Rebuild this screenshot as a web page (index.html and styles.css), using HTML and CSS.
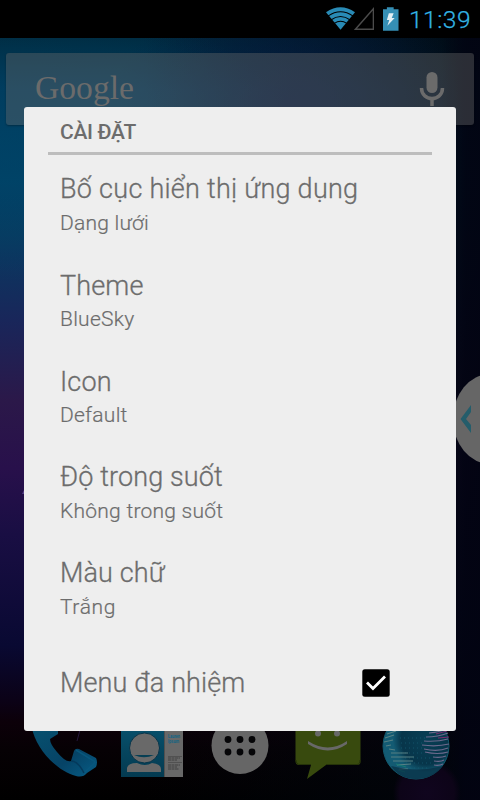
FILE: index.html
```html
<!DOCTYPE html>
<html lang="vi">
<head>
<meta charset="utf-8">
<title>Cài đặt</title>
<link rel="stylesheet" href="styles.css">
</head>
<body>
<div class="screen">
  <header class="status">
    <svg class="wifi" width="30" height="24" viewBox="0 0 30 24"><path d="M0 5Q15-5 30 5L15 23Z" fill="#298bb6"/><path d="M2 9Q15 0 28 9M5 13Q15 6 25 13M8.500 16.500Q15 12 21.500 16.500" fill="none" stroke="#000" stroke-width="1.100"/></svg>
    <svg class="signal" width="21" height="24" viewBox="0 0 21 24"><path d="M1.500 22.500H20V1.500Z" fill="none" stroke="#4b4b4b" stroke-width="1.500"/></svg>
    <svg class="battery" width="16" height="24" viewBox="0 0 16 24"><path d="M0 2H4V0H11V2H16V24H0Z" fill="#358fb5"/><path d="M6 6H11L9 11H12L4.500 19L6.500 13H4Z" fill="#e3f0f5"/></svg>
    <span class="clock">11:39</span>
  </header>
  <div class="search">
    <svg width="468" height="72" viewBox="6 53 468 72">
      <text class="logo" x="35" y="99" textLength="99" lengthAdjust="spacingAndGlyphs">Google</text>
      <rect x="426.500" y="72" width="11" height="21" rx="5.500" fill="#6b6b6b"/>
      <path d="M421.500 88C421.500 102 442.500 102 442.500 88M432 98V106" fill="none" stroke="#6b6b6b" stroke-width="3.500"/>
    </svg>
  </div>
  <svg class="handle" width="24" height="90" viewBox="456 374 24 90"><ellipse cx="490" cy="419" rx="37" ry="45" fill="#666"/><path d="M471 405L460.500 419L471 433V425L466 419L471 412Z" fill="#245d6b"/></svg>
  <svg class="spark" width="3" height="6" viewBox="0 0 3 6"><path d="M3 0L0 6H3Z" fill="#554087"/></svg>
  <svg class="dock" width="480" height="75" viewBox="0 725 480 75">
    <defs>
      <linearGradient id="phone" x1="0" y1="0" x2="1" y2="1"><stop stop-color="#07516f"/><stop offset=".6" stop-color="#064366"/><stop offset="1" stop-color="#075d86"/></linearGradient>
      <radialGradient id="globe" cx=".65" cy=".4"><stop stop-color="#083f55"/><stop offset=".75" stop-color="#07354a"/><stop offset="1" stop-color="#135b73"/></radialGradient>
      <linearGradient id="card" x2="0" y2="1"><stop stop-color="#07516d"/><stop offset="1" stop-color="#043a50"/></linearGradient>
      <radialGradient id="glow"><stop stop-color="#10051e"/><stop offset=".8" stop-color="#0d0418"/><stop offset="1" stop-color="#0d0418" stop-opacity="0"/></radialGradient>
    </defs>
    <circle cx="427" cy="793" r="34" fill="url(#glow)"/>
    <path d="M80 730L77 741" stroke="#25153a"/>
    <path d="M32 728C35 746 54 770 76 776Q83 778 87 773L96 767Q98 762 96 758L79 749Q75 748 74 751L71 761Q66 763 57 752Q50 744 50 739L58 734V728Z" fill="url(#phone)"/>
    <path d="M76 750L94 761Q96 763 91 766L84 773" fill="none" stroke="#08577d" stroke-width="1.500"/>
    <path d="M71 761Q78 761 84 773" fill="none" stroke="#053a5c" stroke-width="1.500"/>
    <rect x="121" y="725" width="62" height="52" fill="#686868"/>
    <rect x="121" y="725" width="44" height="52" fill="url(#card)"/>
    <circle cx="144.500" cy="748" r="15" fill="#696969" stroke="#05344a"/>
    <path d="M134 755H154Q144 759.500 134 755Z" fill="#063f54"/>
    <path d="M127 772V768Q128 763 137 763Q145 767 152 763Q161 764 161 769V772Z" fill="#686868"/>
    <path d="M164.500 725V777" stroke="#505050"/>
    <text class="card-text" x="168" y="738" textLength="12" lengthAdjust="spacingAndGlyphs">Lauren</text><text class="card-text" x="168" y="742.500" textLength="11" lengthAdjust="spacingAndGlyphs">Ipsum</text>
    <path d="M168 758H180M168 760H177M168 765H180M168 767H177M168 769H179" stroke="#414141" stroke-dasharray="3 .5"/>
    <path d="M168 756.500H182M168 762.500H182" stroke="#4b4b4b" stroke-width=".8"/>
    <circle cx="240" cy="745.500" r="28.500" fill="#666"/>
    <g fill="#050507"><circle cx="228" cy="739.500" r="3.400"/><circle cx="240" cy="739.500" r="3.400"/><circle cx="252" cy="739.500" r="3.400"/><circle cx="228" cy="752" r="3.400"/><circle cx="240" cy="752" r="3.400"/><circle cx="252" cy="752" r="3.400"/></g>
    <path d="M295.500 725H360.500V762Q360.500 765 357 765H326L307 779L311 765H299Q295.500 765 295.500 761Z" fill="#384a0e"/>
    <path d="M296 760Q296 764.500 300 764.500H311M326 764.500H357Q360 764.500 360 760" fill="none" stroke="#253309"/>
    <g fill="#686868"><circle cx="318" cy="733.500" r="3"/><circle cx="337" cy="733.500" r="3"/><path d="M308 741Q328 754 347 741V744Q328 757 308 744Z"/></g>
    <circle cx="416" cy="746" r="33" fill="url(#globe)" stroke="#12586c"/>
    <path d="M400 738H425M401 743H425M401 748H424M401 753H425M405 758H432M406 763H431M406 768H430" stroke="#176077" stroke-width=".7" stroke-dasharray="1 3"/>
    <path d="M387 734L396 731M385 738L394 735M384 742L393 740M386 746L391 745M389 749L395 750M391 753L408 753M391 757L414 757M393 761L413 761M397 765L411 764M399 769L408 769" stroke="#568084" stroke-width="1.200"/>
    <path d="M429 733Q440 732 446 729M426 737Q438 737 448 733M424 741Q437 742 448 739M422 745Q437 747 449 744M424 749Q438 752 448 748M425 752Q438 755 448 752M433 757Q441 758 446 756M434 761Q441 762 444 760M434 765Q439 766 443 764" fill="none" stroke="#6c698c" stroke-width="1.200"/>
    <path d="M436 734L447 731M438 738L449 737" stroke="#7b2c70"/>
    <path d="M396 764L406 767M398 770L405 772" stroke="#177c74"/>
    <path d="M391 766Q417 773 443 766Q433 779 416 779Q400 779 391 766Z" fill="#082e43" opacity=".7"/>
  </svg>
  <main class="dialog">
    <h1 class="heading">CÀI ĐẶT</h1>
    <section class="item"><div class="title wide">Bố cục hiển thị ứng dụng</div><div class="value">Dạng lưới</div></section>
    <section class="item low"><div class="title">Theme</div><div class="value">BlueSky</div></section>
    <section class="item low"><div class="title">Icon</div><div class="value">Default</div></section>
    <section class="item"><div class="title">Độ trong suốt</div><div class="value">Không trong suốt</div></section>
    <section class="item"><div class="title">Màu chữ</div><div class="value loose">Trắng</div></section>
    <section class="item toggle"><div class="title">Menu đa nhiệm</div>
      <svg width="28" height="28" viewBox="0 0 28 28"><rect x=".3" y=".3" width="27.400" height="27.400" rx="2.500"/><path d="M5 13.500L11 19.500L23 7.500" fill="none" stroke="#fff" stroke-width="2.800"/></svg>
    </section>
  </main>
</div>
</body>
</html>
```
FILE: styles.css
```css
body { margin: 0; }
.screen {
  position: relative;
  width: 480px;
  height: 800px;
  overflow: hidden;
  font-family: Roboto, "Noto Sans", sans-serif;
  background:
    linear-gradient(90deg, transparent 92%, rgba(2, 3, 18, .75) 97%),
    radial-gradient(ellipse 300px 140px at 0 140px, rgba(0, 68, 104, .5), transparent),
    radial-gradient(ellipse 180px 130px at 290px 110px, rgba(7, 23, 65, .75), transparent),
    linear-gradient(90deg, transparent 30%, rgba(1, 5, 13, .88) 100%),
    linear-gradient(#002b40 38px, #003a5b 90px, #004266 180px, #073b61 234px, #19265a 321px, #2b1849 401px, #28104b 468px, #190e43 535px, #090932 645px, #0b0217 700px, #0c0009 722px, #060104 750px, #000 800px);
}
.status {
  box-sizing: border-box;
  height: 38px;
  padding: 7px 9px 7px 326px;
  display: flex;
  align-items: flex-start;
  background: #000;
}
.signal { margin-left: -1px; }
.battery { margin-left: 9px; }
.clock {
  margin-left: 10px;
  font-size: 24.5px;
  line-height: 26px;
  font-weight: 300;
  letter-spacing: .5px;
  -webkit-text-stroke: .25px #33b5e5;
  color: #33b5e5;
  white-space: nowrap;
}
.search {
  width: 468px;
  height: 72px;
  margin: 15px 6px 0;
  border-radius: 3px;
  overflow: hidden;
  background: rgba(105, 105, 105, .4);
  box-shadow: 0 1px 2px rgba(0, 0, 0, .3);
}
.search svg { display: block; }
.logo {
  font: 34px "Liberation Serif", serif;
  fill: #6b6b6b;
}
.card-text { font: bold 5px "Liberation Sans", sans-serif; fill: #096487; }
.handle { position: absolute; right: 0; top: 374px; }
.spark { position: absolute; left: 22px; top: 488px; }
.dock { position: absolute; left: 0; bottom: 0; }
.dialog {
  position: absolute;
  left: 24px;
  top: 107px;
  box-sizing: border-box;
  width: 432px;
  height: 624px;
  padding: 0 24px;
  border-radius: 3px;
  background: #eee;
  color: #6c6c6c;
}
.heading {
  box-sizing: border-box;
  height: 48px;
  margin: 0;
  padding: 0 12px;
  border-bottom: 3px solid #bdbdbd;
  font-size: 21px;
  line-height: 50px;
  font-weight: 500;
  letter-spacing: -.3px;
}
.item {
  box-sizing: border-box;
  height: 96px;
  padding: 17px 12px 0;
  white-space: nowrap;
}
.title {
  font-size: 27px;
  line-height: 34px;
  font-weight: 300;
  letter-spacing: .13px;
  -webkit-text-stroke: .3px #6c6c6c;
}
.wide { letter-spacing: .27px; }
.low { padding-top: 18px; }
.low .value { line-height: 32px; }
.value {
  font-size: 21px;
  line-height: 34px;
  font-weight: 300;
  letter-spacing: .25px;
  -webkit-text-stroke: .2px #6c6c6c;
}
.loose { letter-spacing: .6px; }
.toggle {
  height: 96px;
  padding: 0 42px 0 12px;
  display: flex;
  justify-content: space-between;
  align-items: center;
}
```
